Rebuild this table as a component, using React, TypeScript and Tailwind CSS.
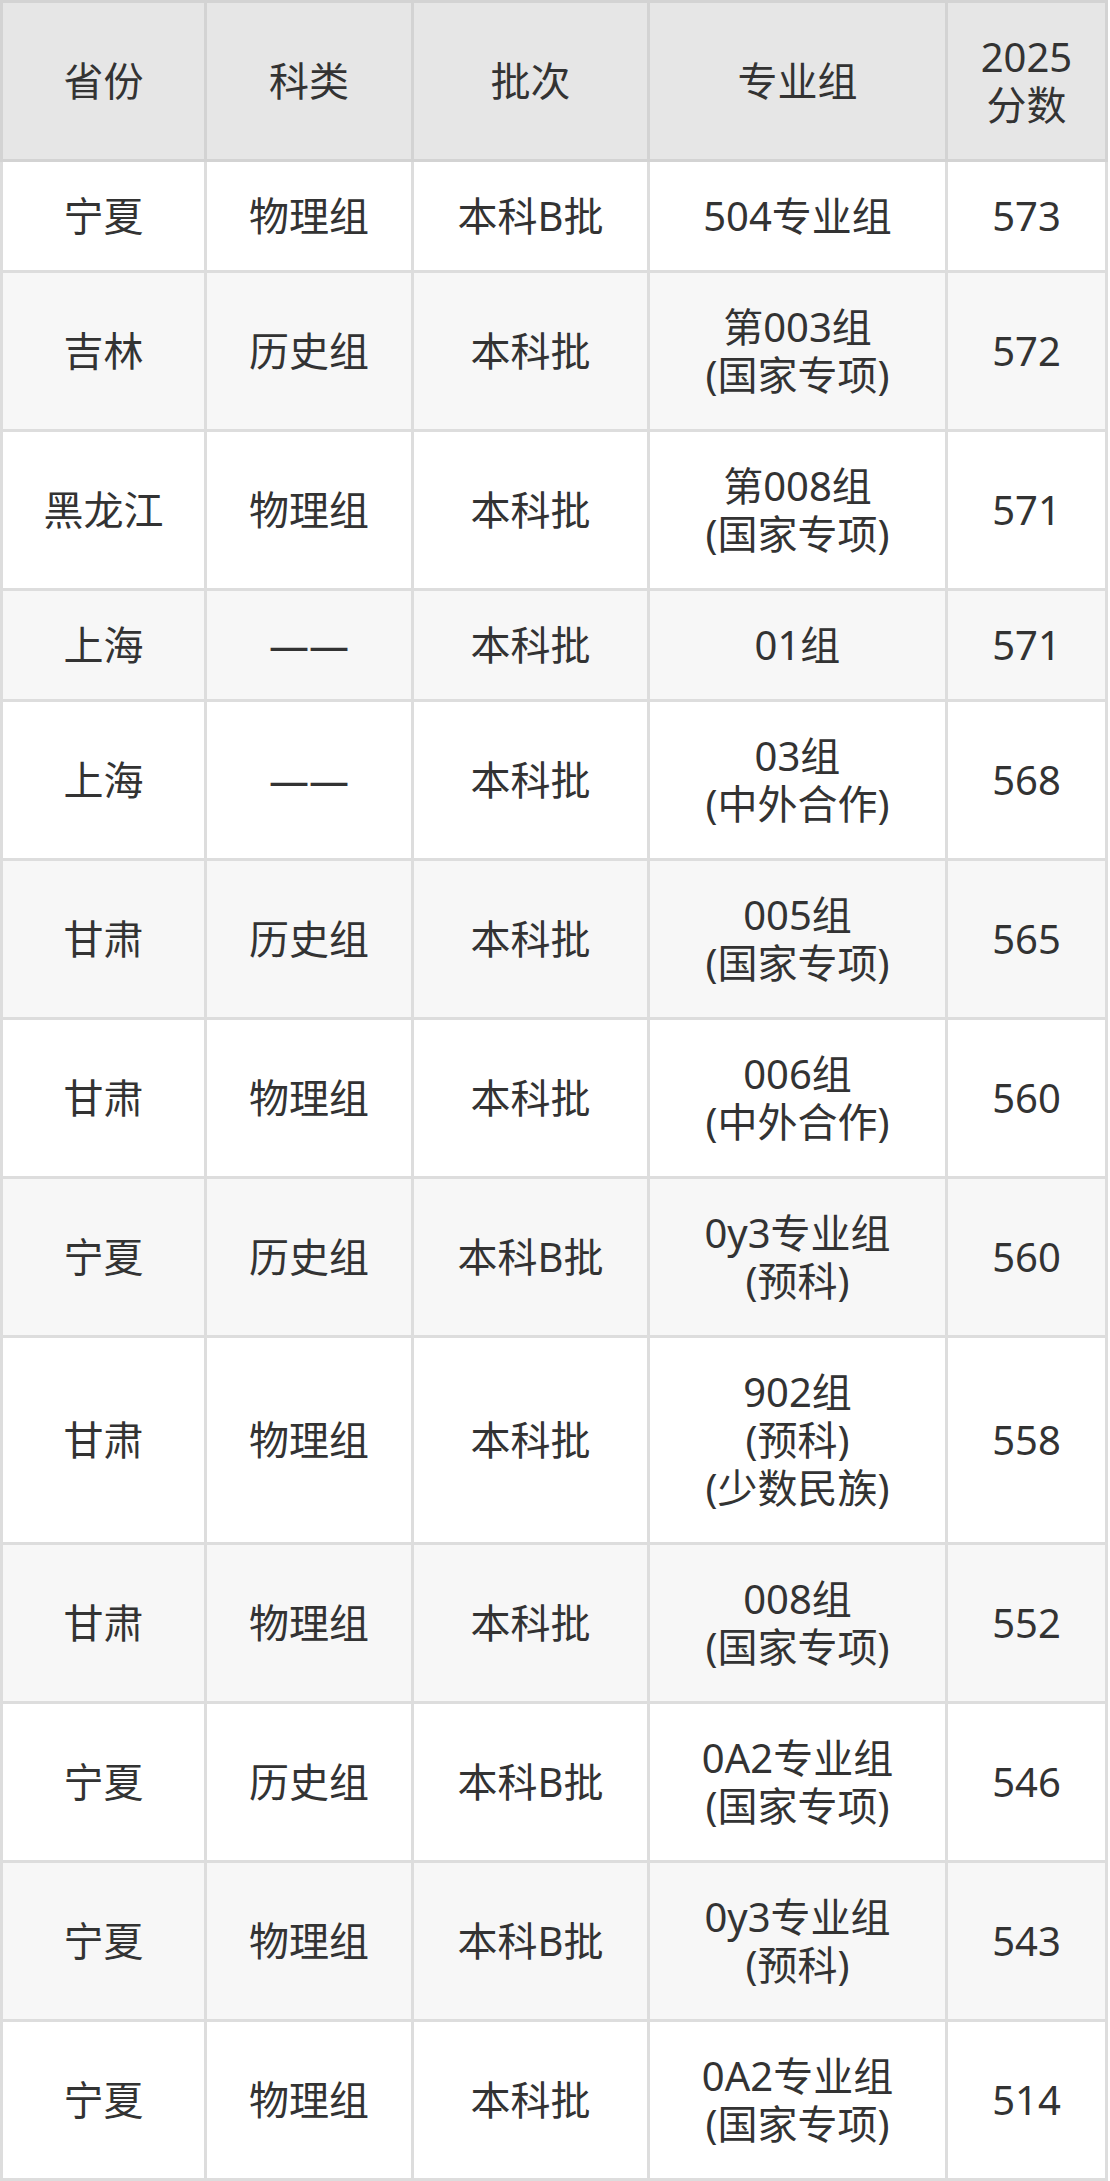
import React from "react";

type Row = {
  province: string;
  subject: string;
  batch: string;
  group: string[];
  score: string;
};

const rows: Row[] = [
  { province: "宁夏", subject: "物理组", batch: "本科B批", group: ["504专业组"], score: "573" },
  { province: "吉林", subject: "历史组", batch: "本科批", group: ["第003组", "(国家专项)"], score: "572" },
  { province: "黑龙江", subject: "物理组", batch: "本科批", group: ["第008组", "(国家专项)"], score: "571" },
  { province: "上海", subject: "——", batch: "本科批", group: ["01组"], score: "571" },
  { province: "上海", subject: "——", batch: "本科批", group: ["03组", "(中外合作)"], score: "568" },
  { province: "甘肃", subject: "历史组", batch: "本科批", group: ["005组", "(国家专项)"], score: "565" },
  { province: "甘肃", subject: "物理组", batch: "本科批", group: ["006组", "(中外合作)"], score: "560" },
  { province: "宁夏", subject: "历史组", batch: "本科B批", group: ["0y3专业组", "(预科)"], score: "560" },
  { province: "甘肃", subject: "物理组", batch: "本科批", group: ["902组", "(预科)", "(少数民族)"], score: "558" },
  { province: "甘肃", subject: "物理组", batch: "本科批", group: ["008组", "(国家专项)"], score: "552" },
  { province: "宁夏", subject: "历史组", batch: "本科B批", group: ["0A2专业组", "(国家专项)"], score: "546" },
  { province: "宁夏", subject: "物理组", batch: "本科B批", group: ["0y3专业组", "(预科)"], score: "543" },
  { province: "宁夏", subject: "物理组", batch: "本科批", group: ["0A2专业组", "(国家专项)"], score: "514" },
];

const th = "border-[3px] border-[#d3d3d3] bg-[#e6e6e6] px-2 py-[30px] font-normal align-middle";
const td = "border-[3px] border-[#dddddd] px-2 py-[30px] align-middle";

export default function App() {
  return (
    <div
      className="w-[1110px] bg-white text-[#333333] text-[40px] leading-[48px]"
      style={{ fontFamily: '"Noto Sans", "Noto Sans CJK SC", sans-serif' }}
    >
      <table className="w-[1108px] table-fixed border-collapse text-center">
        <colgroup>
          <col className="w-[204px]" />
          <col className="w-[207px]" />
          <col className="w-[236px]" />
          <col className="w-[298px]" />
          <col className="w-[160px]" />
        </colgroup>
        <thead>
          <tr>
            <th className={th}>省份</th>
            <th className={th}>科类</th>
            <th className={th}>批次</th>
            <th className={th}>专业组</th>
            <th className={th}>
              2025
              <br />
              分数
            </th>
          </tr>
        </thead>
        <tbody>
          {rows.map((r, i) => (
            <tr key={i} className={i % 2 === 0 ? "bg-white" : "bg-[#f7f7f7]"}>
              <td className={td}>{r.province}</td>
              <td className={td}>{r.subject}</td>
              <td className={td}>{r.batch}</td>
              <td className={td}>
                {r.group.map((g, j) => (
                  <React.Fragment key={j}>
                    {j > 0 && <br />}
                    {g}
                  </React.Fragment>
                ))}
              </td>
              <td className={td}>{r.score}</td>
            </tr>
          ))}
        </tbody>
      </table>
    </div>
  );
}
